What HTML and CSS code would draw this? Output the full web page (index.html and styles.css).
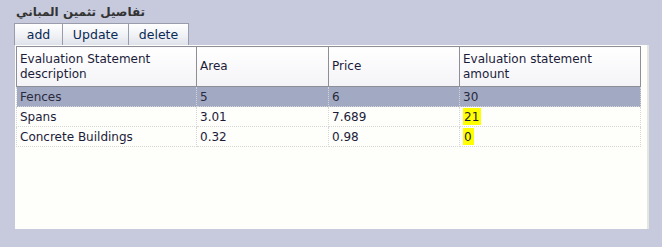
FILE: index.html
```html
<!DOCTYPE html>
<html>
<head>
<meta charset="utf-8">
<link rel="stylesheet" href="styles.css">
</head>
<body>
<div class="page">
  <div class="title" dir="rtl">تفاصيل تثمين المباني</div>
  <div class="toolbar">
    <button class="btn btn-add">add</button>
    <button class="btn btn-update">Update</button>
    <button class="btn btn-delete">delete</button>
  </div>
  <div class="panel">
    <table class="grid">
      <colgroup>
        <col class="c1"><col class="c2"><col class="c3"><col class="c4">
      </colgroup>
      <thead>
        <tr>
          <th>Evaluation Statement description</th>
          <th>Area</th>
          <th>Price</th>
          <th>Evaluation statement amount</th>
        </tr>
      </thead>
      <tbody>
        <tr class="selected">
          <td>Fences</td><td>5</td><td>6</td><td>30</td>
        </tr>
        <tr>
          <td>Spans</td><td>3.01</td><td>7.689</td><td><span class="hl">21</span></td>
        </tr>
        <tr>
          <td>Concrete Buildings</td><td>0.32</td><td>0.98</td><td><span class="hl">0</span></td>
        </tr>
      </tbody>
    </table>
  </div>
</div>
</body>
</html>
```
FILE: styles.css
```css
html, body {
  margin: 0;
  padding: 0;
}
body {
  background: #c6cadc;
  width: 662px;
  height: 247px;
  overflow: hidden;
  font-family: "DejaVu Sans", Verdana, sans-serif;
}
.page {
  padding: 3px 0 0 14px;
  display: flex;
  flex-direction: column;
  align-items: flex-start;
}
.title {
  font-size: 12px;
  font-weight: bold;
  color: #333333;
  line-height: 18px;
  height: 20px;
  padding-left: 2px;
}
.toolbar {
  display: flex;
  height: 22px;
}
.btn {
  font-family: "DejaVu Sans", Verdana, sans-serif;
  font-size: 12.5px;
  color: #0a2a55;
  background: linear-gradient(#ffffff, #eef0f4 60%, #dfe2ea);
  border: 1px solid #9a9cac;
  border-bottom: none;
  margin: 0 0 0 -1px;
  padding: 0 6px;
  height: 22px;
  line-height: 20px;
}
.btn-add { margin-left: 0; width: 49px; }
.btn-update { width: 67px; }
.btn-delete { width: 61px; }
.panel {
  width: 634px;
  height: 184px;
  background: #fefefa;
  border-right: 2px solid #e6e6e0;
  box-sizing: border-box;
  margin-left: 1px;
  padding: 1px 0 0 1px;
}
.grid {
  border-collapse: collapse;
  table-layout: fixed;
  width: 624px;
  font-size: 12px;
  color: #1c1c3a;
}
.c1 { width: 180px; }
.c2 { width: 132px; }
.c3 { width: 131px; }
.c4 { width: 181px; }
.grid th {
  text-align: left;
  font-weight: normal;
  background: linear-gradient(#ffffff, #f4f4f8);
  border: 1px solid #8e8e96;
  height: 39px;
  padding: 0 2px 0 3px;
  line-height: 15px;
  vertical-align: middle;
}
.grid td {
  border: 1px dotted #d6d6d6;
  padding: 0 3px;
  height: 19px;
  line-height: 18px;
  white-space: nowrap;
}
.grid tr.selected td {
  background: #a2a9c2;
  color: #2a2a3e;
}
.hl {
  background: #ffff00;
  padding: 2px 2px 1px 1px;
}
```
